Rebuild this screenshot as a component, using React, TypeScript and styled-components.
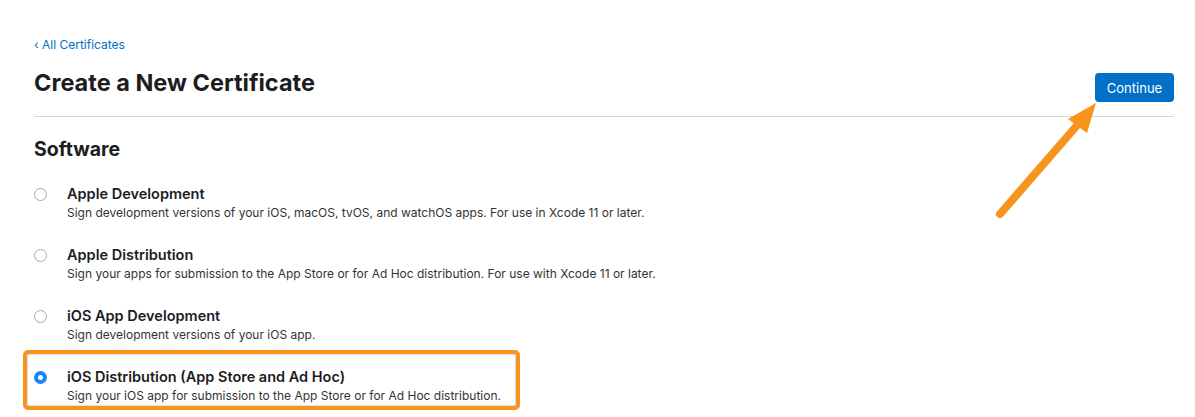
import styled, { createGlobalStyle } from "styled-components";

const BLUE = "#0070c9";
const ORANGE = "#f7941d";

const certificates = [
  {
    id: "apple-dev",
    name: "Apple Development",
    description:
      "Sign development versions of your iOS, macOS, tvOS, and watchOS apps. For use in Xcode 11 or later.",
  },
  {
    id: "apple-dist",
    name: "Apple Distribution",
    description:
      "Sign your apps for submission to the App Store or for Ad Hoc distribution. For use with Xcode 11 or later.",
  },
  {
    id: "ios-dev",
    name: "iOS App Development",
    description: "Sign development versions of your iOS app.",
  },
  {
    id: "ios-dist",
    name: "iOS Distribution (App Store and Ad Hoc)",
    description: "Sign your iOS app for submission to the App Store or for Ad Hoc distribution.",
  },
];

const GlobalStyle = createGlobalStyle`
  body {
    margin: 0;
    background: #fff;
    font-family: Inter, "Noto Sans", "Liberation Sans", sans-serif;
    color: #1d1d1f;
    -webkit-font-smoothing: antialiased;
  }
`;

const Page = styled.main`
  position: relative;
  padding: 37px 21px 0 34px;
  height: 417px;
  box-sizing: border-box;
  overflow: hidden;
`;

const Header = styled.header`
  display: flex;
  justify-content: space-between;
  align-items: flex-end;
  padding-bottom: 14px;
  border-bottom: 1px solid #d6d6d6;
`;

const BackLink = styled.a`
  display: block;
  font-size: 12px;
  color: ${BLUE};
  text-decoration: none;
  line-height: 16px;
`;

const Title = styled.h1`
  margin: 16px 0 5px;
  font-size: 23.5px;
  font-weight: 700;
  line-height: 28px;
`;

const ContinueButton = styled.button`
  width: 79px;
  height: 29px;
  border: none;
  border-radius: 4px;
  background: ${BLUE};
  color: #fff;
  font-family: inherit;
  font-size: 13px;
  cursor: pointer;
`;

const SectionTitle = styled.h2`
  margin: 20px 0 0;
  font-size: 19.5px;
  font-weight: 700;
  line-height: 24px;
`;

const OptionList = styled.div`
  display: flex;
  flex-direction: column;
  gap: 24px;
  margin-top: 23px;
`;

const Option = styled.label<{ $highlighted?: boolean }>`
  position: relative;
  display: flex;
  align-items: flex-start;
  gap: 20px;
  width: fit-content;
  cursor: pointer;

  &::after {
    content: "";
    display: ${(p) => (p.$highlighted ? "block" : "none")};
    position: absolute;
    left: -11px;
    right: -19px;
    top: -17px;
    bottom: -6px;
    border: 4px solid ${ORANGE};
    border-radius: 5px;
    box-shadow: inset 0 0 2px rgba(0, 0, 0, 0.45);
    pointer-events: none;
  }
`;

const Radio = styled.span<{ $checked?: boolean }>`
  flex: none;
  width: 13px;
  height: 13px;
  margin-top: 4px;
  box-sizing: border-box;
  border-radius: 50%;
  border: ${(p) => (p.$checked ? `4px solid #1a82fb` : "1px solid #a9a9a9")};
  background: #fff;
`;

const OptionText = styled.div`
  display: flex;
  flex-direction: column;
`;

const OptionName = styled.span`
  font-size: 14.5px;
  font-weight: 600;
  line-height: 20px;
`;

const OptionDescription = styled.span`
  font-size: 12px;
  line-height: 17px;
  color: #333;
`;

const Arrow = styled.svg`
  position: absolute;
  left: 0;
  top: 0;
  pointer-events: none;
`;

export default function App() {
  const selected = "ios-dist";

  return (
    <>
      <GlobalStyle />
      <Page>
        <Header>
          <div>
            <BackLink href="#">‹ All Certificates</BackLink>
            <Title>Create a New Certificate</Title>
          </div>
          <ContinueButton>Continue</ContinueButton>
        </Header>
        <SectionTitle>Software</SectionTitle>
        <OptionList>
          {certificates.map((c) => (
            <Option key={c.id} $highlighted={c.id === selected}>
              <Radio $checked={c.id === selected} />
              <OptionText>
                <OptionName>{c.name}</OptionName>
                <OptionDescription>{c.description}</OptionDescription>
              </OptionText>
            </Option>
          ))}
        </OptionList>
        <Arrow width="1195" height="417" viewBox="0 0 1195 417">
          <line x1="1000" y1="214" x2="1080" y2="122" stroke={ORANGE} strokeWidth="8" strokeLinecap="round" />
          <polygon points="1096,103 1068,119 1087,133" fill={ORANGE} />
        </Arrow>
      </Page>
    </>
  );
}
